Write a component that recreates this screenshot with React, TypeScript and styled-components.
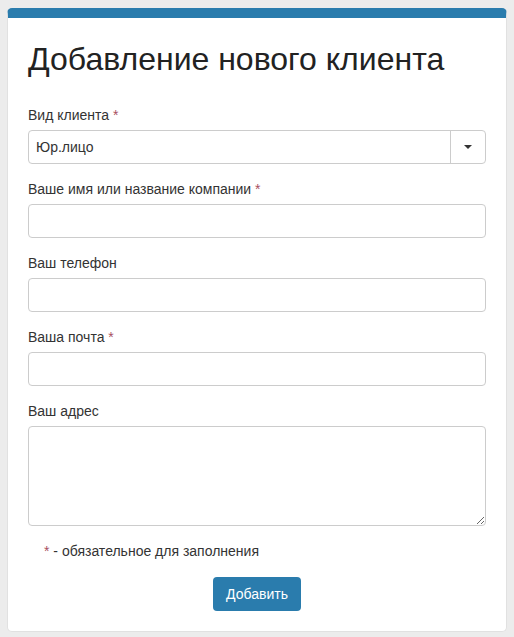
import styled, { createGlobalStyle } from "styled-components"

const GlobalStyle = createGlobalStyle`
    body {
        margin: 0;
        background: #ececec;
        font-family: "Liberation Sans", Arial, sans-serif;
        font-size: 14px;
        color: #333;
    }
`

const Page = styled.div`
    padding: 8px 7px 6px 7px;
`

const Card = styled.div`
    box-sizing: border-box;
    width: 500px;
    background: #fff;
    border: 1px solid #e1e1e1;
    border-top: 10px solid #2a7cad;
    border-radius: 5px;
    padding: 0 20px 20px 20px;
`

const Title = styled.h1`
    font-size: 32px;
    font-weight: normal;
    line-height: 1.1;
    color: #222;
    margin: 24px 0 28px;
`

const Group = styled.div`
    margin-bottom: 15px;
`

const Label = styled.label`
    display: block;
    line-height: 20px;
    margin-bottom: 5px;
`

const Required = styled.span`
    color: #a8505f;
`

const Input = styled.input`
    display: block;
    box-sizing: border-box;
    width: 100%;
    height: 34px;
    border: 1px solid #ccc;
    border-radius: 4px;
    padding: 6px 12px;
    font: inherit;
    background: #fff;
    outline: none;
`

const TextArea = styled.textarea`
    display: block;
    box-sizing: border-box;
    width: 100%;
    height: 100px;
    border: 1px solid #ccc;
    border-radius: 4px;
    padding: 6px 12px;
    font: inherit;
    resize: vertical;
    outline: none;
`

const Select = styled.div`
    display: flex;
    box-sizing: border-box;
    height: 34px;
    border: 1px solid #ccc;
    border-radius: 4px;
    background: #fff;
`

const SelectValue = styled.div`
    flex: 1;
    padding: 0 7px;
    line-height: 32px;
    color: #333;
`

const Arrow = styled.div`
    width: 34px;
    border-left: 1px solid #ccc;
    display: flex;
    align-items: center;
    justify-content: center;
    &::after {
        content: "";
        border-left: 4px solid transparent;
        border-right: 4px solid transparent;
        border-top: 4px solid #333;
    }
`

const Note = styled.p`
    margin: 0;
    padding-left: 16px;
    line-height: 20px;
`

const Actions = styled.div`
    display: flex;
    justify-content: center;
    margin-top: 16px;
`

const Button = styled.button`
    height: 34px;
    padding: 0 13px;
    border: none;
    border-radius: 4px;
    background: #2a7cad;
    color: #fff;
    font: inherit;
    cursor: pointer;
`

export default function App() {
    return (
        <>
            <GlobalStyle />
            <Page>
                <Card>
                    <Title>Добавление нового клиента</Title>
                    <Group>
                        <Label>Вид клиента <Required>*</Required></Label>
                        <Select>
                            <SelectValue>Юр.лицо</SelectValue>
                            <Arrow />
                        </Select>
                    </Group>
                    <Group>
                        <Label>Ваше имя или название компании <Required>*</Required></Label>
                        <Input type="text" />
                    </Group>
                    <Group>
                        <Label>Ваш телефон</Label>
                        <Input type="text" />
                    </Group>
                    <Group>
                        <Label>Ваша почта <Required>*</Required></Label>
                        <Input type="text" />
                    </Group>
                    <Group>
                        <Label>Ваш адрес</Label>
                        <TextArea />
                    </Group>
                    <Note><Required>*</Required> - обязательное для заполнения</Note>
                    <Actions>
                        <Button>Добавить</Button>
                    </Actions>
                </Card>
            </Page>
        </>
    )
}
